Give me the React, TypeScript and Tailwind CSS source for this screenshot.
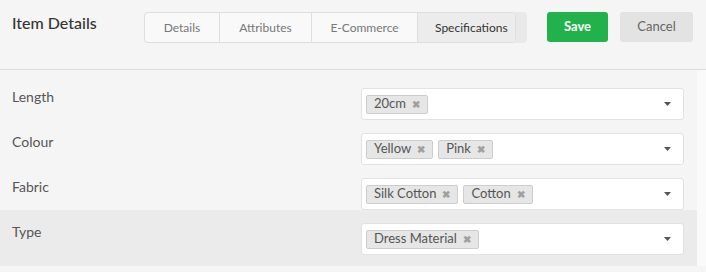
import React from 'react';

const rows = [
  { label: 'Length', tags: ['20cm'] },
  { label: 'Colour', tags: ['Yellow', 'Pink'] },
  { label: 'Fabric', tags: ['Silk Cotton', 'Cotton'] },
  { label: 'Type', tags: ['Dress Material'], active: true },
];

const tabs = [
  { name: 'Details', w: 'w-[74px]' },
  { name: 'Attributes', w: 'w-[92px]' },
  { name: 'E-Commerce', w: 'w-[106px]' },
  { name: 'Specifications', w: 'w-[98px]' },
];

const App: React.FC = () => {
  return (
    <div className="w-[706px] h-[272px] bg-[#f5f5f5] overflow-hidden" style={{ fontFamily: 'Lato, "Open Sans", sans-serif' }}>
      {/* Header */}
      <div className="h-[70px] border-b border-[#dcdcdc] flex items-start pt-[12px] pl-[12px] whitespace-nowrap">
        <h1 className="w-[132px] shrink-0 text-[16px] leading-[20px] font-medium text-[#333] pt-[1px]">Item Details</h1>
        <div className="flex shrink-0 bg-[#e9e9e9] rounded-[4px] pr-[11px]">
          <div className="flex h-[31px] border border-[#dedede] rounded-[4px] bg-[#f9f9f9] overflow-hidden">
            {tabs.map((t, i) => (
              <div
                key={t.name}
                className={
                  i === tabs.length - 1
                    ? `${t.w} pl-[17px] flex items-center text-[12px] text-[#333] bg-[#ececec] border-l border-[#dedede]`
                    : i === 0
                    ? `${t.w} flex items-center justify-center text-[12px] text-[#777]`
                    : `${t.w} flex items-center justify-center text-[12px] text-[#777] border-l border-[#dedede]`
                }
              >
                {t.name}
              </div>
            ))}
          </div>
        </div>
        <button className="ml-[20px] shrink-0 w-[61px] h-[30px] rounded-[3px] bg-[#22b24c] text-white text-[13px] font-bold">Save</button>
        <button className="ml-[12px] shrink-0 w-[73px] h-[30px] rounded-[3px] bg-[#e3e3e3] text-[#666] text-[13px]">Cancel</button>
      </div>

      {/* Rows */}
      <div className="flex">
        <div className="w-[697px] pt-[5px]">
          {rows.map((r) => (
            <div
              key={r.label}
              className={
                r.active
                  ? 'flex pt-[13px] pb-[11px] pl-[12px] pr-[13px] bg-[#ebebeb]'
                  : 'flex pt-[13px] pl-[12px] pr-[13px]'
              }
            >
              <div className="w-[349px] text-[14px] leading-[18px] text-[#555]">{r.label}</div>
              <div className="flex-1 h-[32px] bg-white border border-[#e2e2e2] rounded-[3px] flex items-center pl-[4px] pr-[12px]">
                <div className="flex-1 flex gap-[5px]">
                  {r.tags.map((tag) => (
                    <span
                      key={tag}
                      className="h-[19px] flex items-center gap-[6px] px-[7px] bg-[#e6e6e6] border border-[#cdcdcd] rounded-[2px] text-[13px] text-[#555]"
                    >
                      {tag}
                      <span className="text-[#a0a0a0] text-[10px] font-bold">✖</span>
                    </span>
                  ))}
                </div>
                <svg width="7" height="4" viewBox="0 0 7 4">
                  <path d="M0 0 L7 0 L3.5 4 Z" fill="#555" />
                </svg>
              </div>
            </div>
          ))}
        </div>
        <div className="flex-1 bg-[#fafafa]" />
      </div>
    </div>
  );
};

export default App;
